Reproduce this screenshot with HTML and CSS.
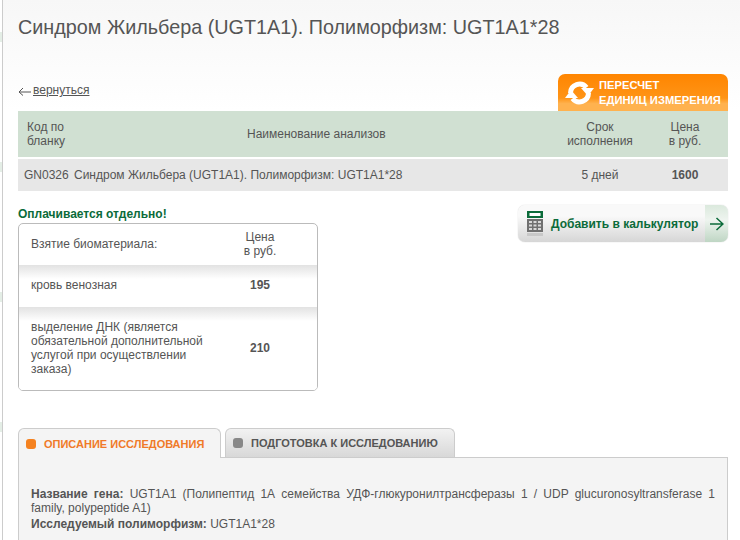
FILE: index.html
```html
<!DOCTYPE html>
<html lang="en">
<head>
    <meta charset="UTF-8">
    <title>Синдром Жильбера</title>
    <link rel="stylesheet" href="styles.css">
</head>
<body>
<div class="page">
    <h1>Синдром Жильбера (UGT1A1). Полиморфизм: UGT1A1*28</h1>

    <div class="topbar">
        <div class="back">
            <svg width="13" height="9" viewBox="0 0 13 9">
                <path d="M13 5H1M5 1L1 5L5 8.500" fill="none" stroke="#555" stroke-width="1"/>
            </svg>
            <a href="#">вернуться</a>
        </div>
        <a class="recalc" href="#">
            <svg width="30" height="26" viewBox="0 0 30 26">
                <path d="M5.500 13 A9 9 0 0 1 21.500 7.500" fill="none" stroke="#fff" stroke-width="5"/>
                <path d="M23.500 13 A9 9 0 0 1 7.500 18.500" fill="none" stroke="#fff" stroke-width="5"/>
                <path d="M16 8 L29 8 L23 16 Z" fill="#fff"/>
                <path d="M13 18 L0 18 L6 10 Z" fill="#fff"/>
            </svg>
            <span>ПЕРЕСЧЕТ<br>ЕДИНИЦ ИЗМЕРЕНИЯ</span>
        </a>
    </div>

    <div class="row head">
        <div class="c-code">Код по<br>бланку</div>
        <div class="c-name">Наименование анализов</div>
        <div class="c-term">Срок<br>исполнения</div>
        <div class="c-price">Цена<br>в руб.</div>
    </div>
    <div class="row item">
        <div class="c-code2">GN0326</div>
        <div class="c-name2">Синдром Жильбера (UGT1A1). Полиморфизм: UGT1A1*28</div>
        <div class="c-term">5 дней</div>
        <div class="c-price"><b>1600</b></div>
    </div>

    <div class="middle">
        <div>
            <div class="separate">Оплачивается отдельно!</div>
            <div class="bio">
                <div class="bio-row bio-head">
                    <div class="bio-name">Взятие биоматериала:</div>
                    <div class="bio-price">Цена<br>в руб.</div>
                </div>
                <div class="bio-row bio-one">
                    <div class="bio-name">кровь венозная</div>
                    <div class="bio-price"><b>195</b></div>
                </div>
                <div class="bio-row bio-two">
                    <div class="bio-name">выделение ДНК (является обязательной дополнительной услугой при осуществлении заказа)</div>
                    <div class="bio-price"><b>210</b></div>
                </div>
            </div>
        </div>
        <a class="calc" href="#">
            <span class="calc-main">
                <svg width="16" height="25" viewBox="0 0 16 25">
                    <rect x="0" y="0" width="16" height="7" fill="#0b6b3a"/>
                    <rect x="2.500" y="2" width="11" height="3" fill="#fff"/>
                    <rect x="0" y="8" width="16" height="13" fill="#707070"/>
                    <path d="M2 10h3v2H2zM6.500 10h3v2h-3zM11 10h3v2h-3zM2 13.500h3v2H2zM6.500 13.500h3v2h-3zM11 13.500h3v2h-3zM2 17h3v2H2zM6.500 17h3v2h-3zM11 17h3v2h-3z" fill="#d8d8d8"/>
                    <rect x="0" y="22" width="16" height="3" fill="#c8c8c8"/>
                </svg>
                Добавить в калькулятор
            </span>
            <span class="calc-go">
                <svg width="14" height="14" viewBox="0 0 14 14">
                    <path d="M0 7H13M6.500 1L13 7L6.500 13" fill="none" stroke="#0b6b3a" stroke-width="1.500"/>
                </svg>
            </span>
        </a>
    </div>

    <div class="tabs">
        <div class="tab active"><i></i>ОПИСАНИЕ ИССЛЕДОВАНИЯ</div>
        <div class="tab"><i></i>ПОДГОТОВКА К ИССЛЕДОВАНИЮ</div>
    </div>
    <div class="tab-body">
        <p><b>Название гена:</b> UGT1A1 (Полипептид 1А семейства УДФ-глюкуронилтрансферазы 1 / UDP glucuronosyltransferase 1 family, polypeptide A1)</p>
        <p><b>Исследуемый полиморфизм:</b> UGT1A1*28</p>
    </div>
</div>
</body>
</html>
```

FILE: styles.css
```css
body { margin: 0; height: 540px; overflow: hidden; font-family: "Liberation Sans", Arial, sans-serif; font-size: 12px; line-height: 14px; color: #555; background: repeating-linear-gradient(#fff 0, #fff 32px, #e4eee6 32px, #e4eee6 42px, #fff 42px, #fff 130px); }
a { color: inherit; }
.page { height: 540px; box-sizing: border-box; margin-left: 2px; padding: 0 12px 0 15px; border-left: 1px solid #ccc; background: linear-gradient(#f7f7f7, #fff 110px); }

h1 { margin: 0; padding-top: 15px; height: 74px; box-sizing: border-box; font-size: 19.800px; line-height: 24px; font-weight: normal; color: #555; }

.topbar { display: flex; justify-content: space-between; align-items: flex-end; height: 37px; }
.back { display: flex; align-items: flex-end; gap: 2px; padding-bottom: 14px; }
.back svg { margin-bottom: 1px; }
.recalc { display: flex; align-items: center; gap: 4px; width: 170px; height: 37px; box-sizing: border-box; padding-left: 7px; border-radius: 7px 7px 0 0; background: linear-gradient(#ff8500, #ff9416 65%, #ffb24f 80%); color: #fff; font-size: 11.200px; line-height: 15px; font-weight: bold; text-decoration: none; }

.row { display: flex; align-items: center; }
.head { height: 46px; background: #d0e0d2; }
.item { height: 32px; margin-top: 2px; background: #e7e7e7; }
.c-code { width: 229px; padding-left: 9px; box-sizing: border-box; }
.c-name { width: 311px; }
.c-code2 { width: 56px; padding-left: 6px; box-sizing: border-box; }
.c-name2 { width: 484px; }
.c-term { width: 84px; text-align: center; }
.c-price { width: 86px; text-align: center; }

.middle { display: flex; justify-content: space-between; align-items: flex-start; margin-top: 16px; }
.separate { color: #0b6b3a; font-weight: bold; margin-bottom: 2px; }
.bio { width: 300px; box-sizing: border-box; border: 1px solid #bbb; border-radius: 5px; background: #fff; overflow: hidden; }
.bio-row { display: flex; align-items: center; box-sizing: border-box; padding-bottom: 2px; }
.bio-head { height: 41px; }
.bio-one { height: 42px; }
.bio-two { height: 83px; }
.bio-one, .bio-two { background: linear-gradient(#e2e2e2, #fff 14px); }
.bio-name { width: 182px; padding-left: 12px; }
.bio-price { width: 94px; text-align: center; }

.calc { display: flex; width: 210px; height: 37px; margin-top: -2px; box-sizing: border-box; border-radius: 7px; text-decoration: none; overflow: hidden; box-shadow: 0 0 1px #bbb; }
.calc-main { flex: 1; display: flex; align-items: center; gap: 8px; padding-left: 9px; color: #0b6b3a; font-weight: bold; background: linear-gradient(#f9f9f9 30%, #d6d6d6); }
.calc-go { width: 23px; display: flex; align-items: center; justify-content: center; background: linear-gradient(#dbe9dd, #eef4ef 40%, #bfd6c4); }

.tabs { display: flex; gap: 4px; margin-top: 37px; height: 30px; }
.tab { display: flex; align-items: center; box-sizing: border-box; width: 230px; height: 29px; padding-left: 7px; border: 1px solid #ccc; border-bottom: 0; border-radius: 6px 6px 0 0; background: linear-gradient(#f2f2f2, #d8d8d8); font-weight: bold; font-size: 11px; color: #555; }
.tab i { width: 10px; height: 10px; margin-right: 8px; border-radius: 3px; background: #888; }
.tab.active { width: 203px; height: 30px; background: #f4f4f4; color: #f07a28; position: relative; z-index: 1; }
.tab.active i { background: #f58220; }
.tab-body { box-sizing: border-box; height: 100px; margin-top: -1px; padding: 29px 12px 0; background: #f4f4f4; border: 1px solid #ccc; border-bottom: 0; }
.tab-body p { margin: 0 0 2px; text-align: justify; }
```
